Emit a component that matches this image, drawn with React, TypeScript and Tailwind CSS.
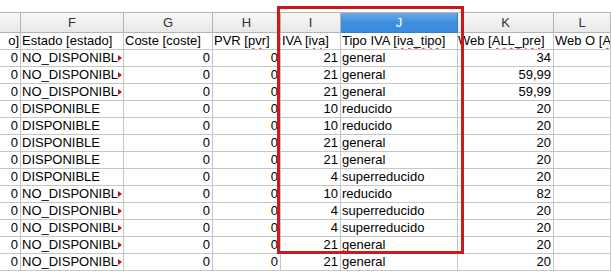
import React from 'react';

type Row = { e: string; f: string; g: string; h: string; i: string; j: string; k: string };

const rows: Row[] = [
  { e: '0', f: 'NO_DISPONIBLE', g: '0', h: '0', i: '21', j: 'general', k: '34' },
  { e: '0', f: 'NO_DISPONIBLE', g: '0', h: '0', i: '21', j: 'general', k: '59,99' },
  { e: '0', f: 'NO_DISPONIBLE', g: '0', h: '0', i: '21', j: 'general', k: '59,99' },
  { e: '0', f: 'DISPONIBLE', g: '0', h: '0', i: '10', j: 'reducido', k: '20' },
  { e: '0', f: 'DISPONIBLE', g: '0', h: '0', i: '10', j: 'reducido', k: '20' },
  { e: '0', f: 'DISPONIBLE', g: '0', h: '0', i: '21', j: 'general', k: '20' },
  { e: '0', f: 'DISPONIBLE', g: '0', h: '0', i: '21', j: 'general', k: '20' },
  { e: '0', f: 'DISPONIBLE', g: '0', h: '0', i: '4', j: 'superreducido', k: '20' },
  { e: '0', f: 'NO_DISPONIBLE', g: '0', h: '0', i: '10', j: 'reducido', k: '82' },
  { e: '0', f: 'NO_DISPONIBLE', g: '0', h: '0', i: '4', j: 'superreducido', k: '20' },
  { e: '0', f: 'NO_DISPONIBLE', g: '0', h: '0', i: '4', j: 'superreducido', k: '20' },
  { e: '0', f: 'NO_DISPONIBLE', g: '0', h: '0', i: '21', j: 'general', k: '20' },
  { e: '0', f: 'NO_DISPONIBLE', g: '0', h: '0', i: '21', j: 'general', k: '20' },
];

const cols = 'grid grid-cols-[21px_103px_89px_68px_60px_117px_96px_1fr]';
const base = 'h-[17px] border-r border-b border-[#c6c6c6] overflow-hidden whitespace-nowrap leading-[16px]';
const txt = `${base} pl-[1px]`;
const num = `${base} text-right pr-[2px]`;
const head =
  'h-[20px] border-r border-b border-[#b4b4b4] bg-gradient-to-b from-[#f7f7f7] to-[#e9e9e9] flex items-center justify-center text-[#333] leading-none';

const Wavy = ({ children }: { children: React.ReactNode }) => (
  <span className="underline decoration-wavy decoration-[#e02020] decoration-1 underline-offset-[2px]">{children}</span>
);

const Overflow = ({ text }: { text: string }) => {
  const clipped = text.length > 12;
  return (
    <div className={`${txt} flex items-center`}>
      <span className="flex-1 overflow-hidden">{text}</span>
      {clipped && (
        <span className="shrink-0 w-0 h-0 border-y-[3px] border-y-transparent border-l-[4px] border-l-[#b01818] mr-[1px]" />
      )}
    </div>
  );
};

export default function App() {
  return (
    <div className="relative w-[611px] h-[273px] overflow-hidden bg-white pt-[12px] text-[13px] text-black font-['Liberation_Sans',Arial,sans-serif]">
      <div className={`${cols} border-t border-[#b4b4b4]`}>
        <div className={head}></div>
        <div className={head}>F</div>
        <div className={head}>G</div>
        <div className={head}>H</div>
        <div className={head}>I</div>
        <div className="h-[20px] border-r border-b border-[#3a7cc4] bg-gradient-to-b from-[#6aaae8] via-[#3f8fdf] to-[#3a8ade] flex items-center justify-center text-white leading-none">
          J
        </div>
        <div className={head}>K</div>
        <div className={head}>L</div>
      </div>

      <div className={cols}>
        <div className={`${base} text-right pr-[1px]`}>o]</div>
        <div className={txt}>Estado [estado]</div>
        <div className={txt}>Coste [coste]</div>
        <div className={txt}>
          PVR [<Wavy>pvr</Wavy>]
        </div>
        <div className={txt}>
          IVA [<Wavy>iva</Wavy>]
        </div>
        <div className={txt}>
          Tipo IVA [<Wavy>iva_tipo</Wavy>]
        </div>
        <div className={`${base} pl-0`}>
          Web [<Wavy>ALL_pre</Wavy>]
        </div>
        <div className={txt}>
          Web O [<Wavy>ALL_pre</Wavy>]
        </div>
      </div>

      {rows.map((r, idx) => (
        <div key={idx} className={cols}>
          <div className={num}>{r.e}</div>
          <Overflow text={r.f} />
          <div className={num}>{r.g}</div>
          <div className={num}>{r.h}</div>
          <div className={num}>{r.i}</div>
          <div className={txt}>{r.j}</div>
          <div className={num}>{r.k}</div>
          <div className={txt}></div>
        </div>
      ))}

      <div className="absolute left-[277px] top-[6px] w-[187px] h-[248px] border-[3px] border-[#cc1a1a] pointer-events-none" />
    </div>
  );
}
